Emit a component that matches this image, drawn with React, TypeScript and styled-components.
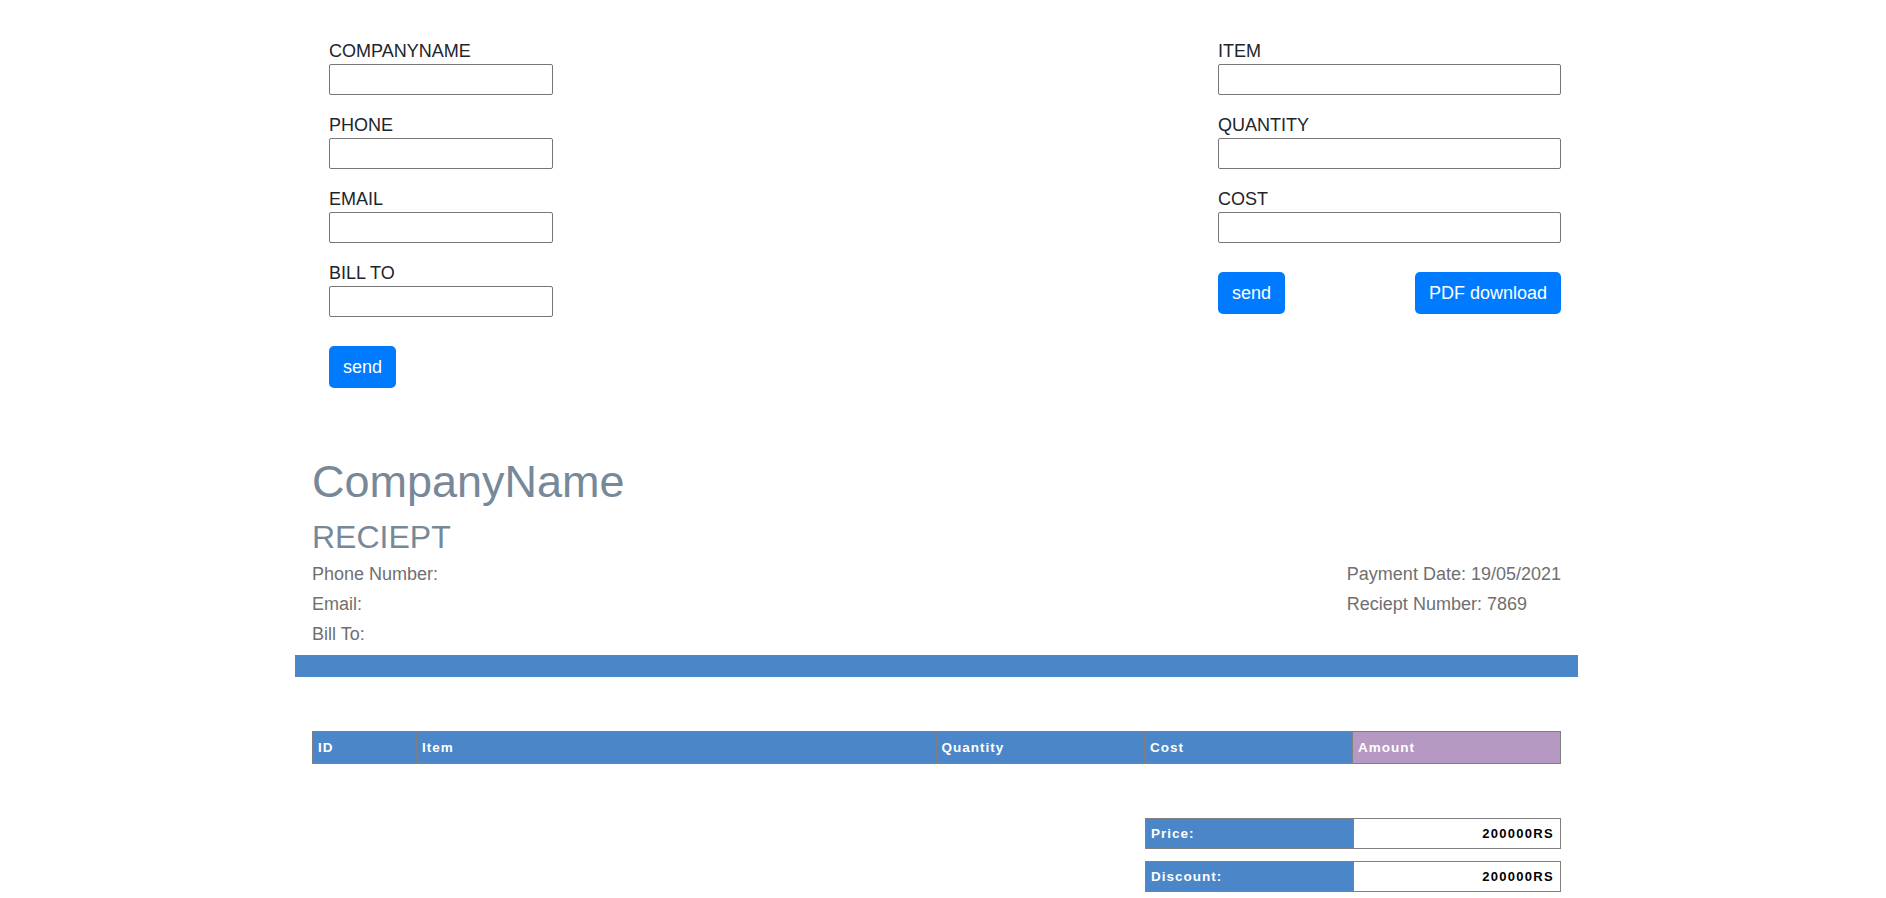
import React from 'react';
import styled, { createGlobalStyle } from 'styled-components';

const GlobalStyle = createGlobalStyle`
  html, body {
    margin: 0;
    padding: 0;
    background: #ffffff;
  }
  body {
    font-family: "Liberation Sans", Arial, sans-serif;
    font-size: 18px;
    color: #212529;
  }
  * { box-sizing: border-box; }
`;

const Page = styled.div`
  width: 1283px;
  margin-left: 295px;
  padding-bottom: 40px;
`;

const FormSection = styled.section`
  display: flex;
  justify-content: space-between;
  align-items: flex-start;
  padding: 42px 17px 0 34px;
`;

const Column = styled.div<{ $width: number }>`
  width: ${(p) => p.$width}px;
  display: flex;
  flex-direction: column;
`;

const Field = styled.div`
  display: flex;
  flex-direction: column;
  margin-bottom: 21px;
`;

const Label = styled.label`
  font-size: 18px;
  line-height: 19px;
  margin-bottom: 3px;
  color: #212529;
`;

const Input = styled.input`
  height: 31px;
  width: 100%;
  margin: 0;
  border: 1px solid #767676;
  border-radius: 2px;
  padding: 1px 4px;
  font-family: inherit;
  font-size: 15px;
  background: #fff;
`;

const ButtonRow = styled.div`
  display: flex;
  justify-content: space-between;
  margin-top: 8px;
`;

const Button = styled.button`
  height: 42px;
  padding: 0 14px;
  background: #007bff;
  color: #ffffff;
  border: none;
  border-radius: 5px;
  font-family: "Liberation Sans", Arial, sans-serif;
  font-size: 18px;
  cursor: pointer;
`;

const Receipt = styled.section`
  margin-top: 67px;
`;

const Header = styled.div`
  padding: 0 17px;
`;

const CompanyTitle = styled.h1`
  margin: 0;
  font-size: 45px;
  font-weight: 400;
  line-height: 54px;
  color: #778899;
`;

const ReceiptTitle = styled.h2`
  margin: 9px 0 0;
  font-size: 32px;
  font-weight: 400;
  line-height: 38px;
  color: #778899;
`;

const InfoRow = styled.div`
  display: flex;
  justify-content: space-between;
  margin-top: 3px;
`;

const InfoBlock = styled.div`
  display: flex;
  flex-direction: column;
`;

const InfoLine = styled.span`
  font-size: 18px;
  line-height: 30px;
  color: #6f6f6f;
`;

const Divider = styled.div`
  height: 22px;
  background: #4a86c8;
  margin-top: 6px;
`;

const TableArea = styled.div`
  padding: 54px 17px 0;
  display: flex;
  flex-direction: column;
`;

const ItemsTable = styled.table`
  width: 100%;
  border-collapse: collapse;
  table-layout: fixed;
`;

const HeadCell = styled.th<{ $accent?: boolean }>`
  height: 32px;
  padding: 0 5px;
  border: 1px solid #808080;
  background: ${(p) => (p.$accent ? '#b599c2' : '#4a86c8')};
  color: #ffffff;
  font-size: 13.5px;
  font-weight: 700;
  letter-spacing: 1px;
  text-align: left;
`;

const SummaryTable = styled.table<{ $first?: boolean }>`
  width: 416px;
  margin-left: auto;
  border-collapse: collapse;
  table-layout: fixed;
  margin-top: ${(p) => (p.$first ? '54px' : '12px')};
`;

const SummaryLabel = styled.th`
  height: 30px;
  padding: 0 5px;
  border: 1px solid #808080;
  background: #4a86c8;
  color: #ffffff;
  font-size: 13.5px;
  font-weight: 700;
  letter-spacing: 1px;
  text-align: left;
`;

const SummaryValue = styled.td`
  height: 30px;
  padding: 0 6px;
  border: 1px solid #808080;
  background: #ffffff;
  color: #000000;
  font-size: 13px;
  font-weight: 700;
  letter-spacing: 1.3px;
  text-align: right;
`;

const leftFields = ['COMPANYNAME', 'PHONE', 'EMAIL', 'BILL TO'];
const rightFields = ['ITEM', 'QUANTITY', 'COST'];

const columns: { label: string; width: string; accent?: boolean }[] = [
  { label: 'ID', width: '8.33%' },
  { label: 'Item', width: '41.63%' },
  { label: 'Quantity', width: '16.7%' },
  { label: 'Cost', width: '16.67%' },
  { label: 'Amount', width: '16.67%', accent: true },
];

const summaries = [
  { label: 'Price:', value: '200000RS' },
  { label: 'Discount:', value: '200000RS' },
];

export default function App() {
  return (
    <>
      <GlobalStyle />
      <Page>
        <FormSection>
          <Column $width={224}>
            {leftFields.map((f) => (
              <Field key={f}>
                <Label>{f}</Label>
                <Input type="text" />
              </Field>
            ))}
            <ButtonRow>
              <Button>send</Button>
            </ButtonRow>
          </Column>
          <Column $width={343}>
            {rightFields.map((f) => (
              <Field key={f}>
                <Label>{f}</Label>
                <Input type="text" />
              </Field>
            ))}
            <ButtonRow>
              <Button>send</Button>
              <Button>PDF download</Button>
            </ButtonRow>
          </Column>
        </FormSection>

        <Receipt>
          <Header>
            <CompanyTitle>CompanyName</CompanyTitle>
            <ReceiptTitle>RECIEPT</ReceiptTitle>
            <InfoRow>
              <InfoBlock>
                <InfoLine>Phone Number:</InfoLine>
                <InfoLine>Email:</InfoLine>
                <InfoLine>Bill To:</InfoLine>
              </InfoBlock>
              <InfoBlock>
                <InfoLine>Payment Date: 19/05/2021</InfoLine>
                <InfoLine>Reciept Number: 7869</InfoLine>
              </InfoBlock>
            </InfoRow>
          </Header>
          <Divider />
          <TableArea>
            <ItemsTable>
              <colgroup>
                {columns.map((c) => (
                  <col key={c.label} style={{ width: c.width }} />
                ))}
              </colgroup>
              <thead>
                <tr>
                  {columns.map((c) => (
                    <HeadCell key={c.label} $accent={c.accent}>
                      {c.label}
                    </HeadCell>
                  ))}
                </tr>
              </thead>
            </ItemsTable>
            {summaries.map((s, i) => (
              <SummaryTable key={s.label} $first={i === 0}>
                <tbody>
                  <tr>
                    <SummaryLabel>{s.label}</SummaryLabel>
                    <SummaryValue>{s.value}</SummaryValue>
                  </tr>
                </tbody>
              </SummaryTable>
            ))}
          </TableArea>
        </Receipt>
      </Page>
    </>
  );
}
